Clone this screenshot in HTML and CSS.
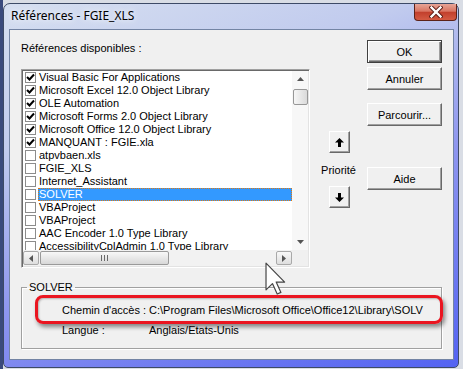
FILE: index.html
```html
<!DOCTYPE html>
<html lang="fr">
<head>
  <meta charset="UTF-8" />
  <title>Références - FGIE_XLS</title>
  <link rel="stylesheet" href="styles.css">
</head>
<body>
  <div class="desk">
    <div class="window">
      <div class="titlebar">
        <span class="title">Références - FGIE_XLS</span>
        <span class="close">
          <svg width="14" height="12" viewBox="0 0 14 12">
            <path d="M2.5 1.5 L11.5 10.5 M11.5 1.5 L2.5 10.5" stroke="#5a1a14" stroke-width="4.2" stroke-linecap="square"/>
            <path d="M2.5 1.5 L11.5 10.5 M11.5 1.5 L2.5 10.5" stroke="#fff" stroke-width="2.4" stroke-linecap="square"/>
          </svg>
        </span>
      </div>

      <div class="client">
        <div class="top">
          <div class="refs">
            <div class="lbl">Références disponibles :</div>
            <div class="listbox">
              <ul class="items">
                <li><span class="cb"><svg width="9" height="9" viewBox="0 0 9 9"><path d="M1 4 L3.5 6.5 L8 1.5" fill="none" stroke="#000" stroke-width="2"/></svg></span>Visual Basic For Applications</li>
                <li><span class="cb"><svg width="9" height="9" viewBox="0 0 9 9"><path d="M1 4 L3.5 6.5 L8 1.5" fill="none" stroke="#000" stroke-width="2"/></svg></span>Microsoft Excel 12.0 Object Library</li>
                <li><span class="cb"><svg width="9" height="9" viewBox="0 0 9 9"><path d="M1 4 L3.5 6.5 L8 1.5" fill="none" stroke="#000" stroke-width="2"/></svg></span>OLE Automation</li>
                <li><span class="cb"><svg width="9" height="9" viewBox="0 0 9 9"><path d="M1 4 L3.5 6.5 L8 1.5" fill="none" stroke="#000" stroke-width="2"/></svg></span>Microsoft Forms 2.0 Object Library</li>
                <li><span class="cb"><svg width="9" height="9" viewBox="0 0 9 9"><path d="M1 4 L3.5 6.5 L8 1.5" fill="none" stroke="#000" stroke-width="2"/></svg></span>Microsoft Office 12.0 Object Library</li>
                <li><span class="cb"><svg width="9" height="9" viewBox="0 0 9 9"><path d="M1 4 L3.5 6.5 L8 1.5" fill="none" stroke="#000" stroke-width="2"/></svg></span>MANQUANT : FGIE.xla</li>
                <li><span class="cb"></span>atpvbaen.xls</li>
                <li><span class="cb"></span>FGIE_XLS</li>
                <li><span class="cb"></span>Internet_Assistant</li>
                <li><span class="cb"></span><span class="sel">SOLVER</span></li>
                <li><span class="cb"></span>VBAProject</li>
                <li><span class="cb"></span>VBAProject</li>
                <li><span class="cb"></span>AAC Encoder 1.0 Type Library</li>
                <li><span class="cb"></span>AccessibilityCplAdmin 1.0 Type Library</li>
              </ul>
              <div class="vsb">
                <span class="arr"><svg width="7" height="4" viewBox="0 0 7 4"><path d="M3.5 0 L7 4 L0 4 Z" fill="#555"/></svg></span>
                <span class="vthumb"></span>
                <span class="track"></span>
                <span class="arr"><svg width="7" height="4" viewBox="0 0 7 4"><path d="M0 0 L7 0 L3.5 4 Z" fill="#555"/></svg></span>
              </div>
              <div class="hsb">
                <span class="sbtn"><svg width="4" height="7" viewBox="0 0 4 7"><path d="M4 0 L4 7 L0 3.5 Z" fill="#555"/></svg></span>
                <span class="hthumb"><span class="grip"></span></span>
                <span class="track"></span>
                <span class="sbtn"><svg width="4" height="7" viewBox="0 0 4 7"><path d="M0 0 L4 3.5 L0 7 Z" fill="#555"/></svg></span>
              </div>
              <div class="corner"></div>
            </div>
          </div>

          <div class="prio">
            <span class="btn arrow-btn"><svg width="9" height="9" viewBox="0 0 9 9"><path d="M4.5 0 L9 4.5 L6 4.5 L6 9 L3 9 L3 4.5 L0 4.5 Z" fill="#000"/></svg></span>
            <span class="prio-lbl">Priorité</span>
            <span class="btn arrow-btn"><svg width="9" height="9" viewBox="0 0 9 9"><path d="M3 0 L6 0 L6 4.5 L9 4.5 L4.5 9 L0 4.5 L3 4.5 Z" fill="#000"/></svg></span>
          </div>

          <div class="buttons">
            <span class="btn default">OK</span>
            <span class="btn cancel">Annuler</span>
            <span class="btn browse">Parcourir...</span>
            <span class="btn help">Aide</span>
          </div>
        </div>

        <fieldset class="group">
          <legend>SOLVER</legend>
          <div class="info">
            <span>Chemin d'accès :</span>
            <span>C:\Program Files\Microsoft Office\Office12\Library\SOLV</span>
            <span>Langue :</span>
            <span>Anglais/Etats-Unis</span>
          </div>
        </fieldset>
      </div>
    </div>
  </div>

  <div class="mark"></div>
  <svg class="cursor" width="21" height="34" viewBox="0 0 12.4 20">
    <path d="M0.6 0.6 L0.6 16.4 L4.4 12.7 L7.2 18.9 L9.4 17.9 L6.6 11.8 L11.6 11.8 Z" fill="#fff" stroke="#444" stroke-width="0.7" stroke-linejoin="round"/>
  </svg>
</body>
</html>
```
FILE: styles.css
```css
html, body {
  margin: 0;
  padding: 0;
}
body {
  width: 463px;
  height: 369px;
  overflow: hidden;
  position: relative;
  background: linear-gradient(to right, #3a4a7c 0, #3a4a7c 3px, #d9dde5 3px);
  font-family: "Liberation Sans", sans-serif;
  font-size: 11px;
  color: #000;
}
.desk {
  padding: 3px 0 0 3px;
}
.window {
  width: 454px;
  height: 363px;
  border: 1px solid #3d4a66;
  border-radius: 7px 7px 5px 5px;
  background: linear-gradient(160deg, #d6dff0 0%, #c1cbee 28%, #8e96ef 58%, #5363f2 100%);
  display: flex;
  flex-direction: column;
}
.titlebar {
  height: 25px;
  display: flex;
  justify-content: space-between;
  align-items: flex-start;
}
.title {
  font-family: "Noto Sans", sans-serif;
  font-size: 12px;
  line-height: 16px;
  padding: 4px 0 0 7px;
  text-shadow: 0 0 8px #eef2fb, 0 0 4px #eef2fb;
}
.close {
  width: 41px;
  height: 16px;
  margin-right: 1px;
  border: 1px solid #5c2218;
  border-top: none;
  border-radius: 0 0 4px 4px;
  background: linear-gradient(#e7a597 0%, #d97562 45%, #c2402d 52%, #d45b43 100%);
  display: flex;
  align-items: center;
  justify-content: center;
}
.client {
  margin: 0 4px 0 5px;
  height: 329px;
  border: 1px solid #7384a4;
  background: #f0f0f0;
  padding: 10px 0 0 11px;
  box-sizing: border-box;
  height: 331px;
}
.top {
  display: flex;
  height: 228px;
}
.refs {
  width: 289px;
}
.lbl {
  margin-top: 1px;
  line-height: 14px;
  height: 14px;
}
.listbox {
  margin-top: 14px;
  width: 289px;
  height: 199px;
  box-sizing: border-box;
  border: 1px solid;
  border-color: #a0a0a0 #fff #fff #a0a0a0;
  box-shadow: inset 1px 1px 0 #696969, inset -1px -1px 0 #e3e3e3;
  padding: 1px;
  background: #fff;
  display: grid;
  grid-template-columns: 1fr 16px;
  grid-template-rows: 1fr 16px;
}
.items {
  list-style: none;
  margin: 0;
  padding: 0;
  overflow: hidden;
  white-space: nowrap;
}
.items li {
  height: 13px;
  line-height: 13px;
  display: flex;
  align-items: center;
}
.cb {
  width: 9px;
  height: 9px;
  border: 1px solid #8c8c8c;
  background: #fff;
  margin: 0 3px 0 2px;
  flex: none;
  display: flex;
}
.sel {
  flex: 1;
  margin-left: -1px;
  height: 11px;
  line-height: 11px;
  padding-left: 0;
  background: #3399ff;
  color: #fff;
  border: 1px dotted #e07a10;
}
.vsb {
  background: #f7f7f7;
  display: flex;
  flex-direction: column;
  align-items: center;
}
.vsb .arr {
  height: 16px;
  display: flex;
  align-items: center;
  justify-content: center;
  flex: none;
}
.vthumb {
  width: 13px;
  height: 14px;
  margin-top: 2px;
  border: 1px solid #979797;
  border-radius: 2px;
  background: linear-gradient(to right, #f6f6f6, #dadada);
  flex: none;
}
.track {
  flex: 1;
}
.hsb {
  background: #f2f2f2;
  display: flex;
  align-items: stretch;
}
.sbtn {
  width: 14px;
  margin: 1px 0;
  border: 1px solid #a9a9a9;
  border-radius: 2px;
  background: linear-gradient(#f8f8f8, #dedede);
  display: flex;
  align-items: center;
  justify-content: center;
  flex: none;
}
.hthumb {
  width: 127px;
  margin: 1px 0 1px 1px;
  border: 1px solid #9a9a9a;
  border-radius: 2px;
  background: linear-gradient(#f8f8f8, #d8d8d8);
  display: flex;
  align-items: center;
  justify-content: center;
  flex: none;
}
.grip {
  width: 7px;
  height: 6px;
  background: repeating-linear-gradient(to right, #6a6a6a 0 1px, transparent 1px 3px);
}
.corner {
  background: #f0f0f0;
}
.btn {
  box-sizing: border-box;
  display: flex;
  align-items: center;
  justify-content: center;
  background: #f0f0f0;
  border: 1px solid;
  border-color: #fff #696969 #696969 #fff;
  box-shadow: inset -1px -1px 0 #a0a0a0;
}
.prio {
  width: 57px;
  display: flex;
  flex-direction: column;
  align-items: center;
  padding-top: 91px;
  box-sizing: border-box;
}
.arrow-btn {
  width: 21px;
  height: 22px;
  margin-left: 1px;
}
.prio-lbl {
  line-height: 14px;
  margin: 10px 0 9px;
}
.buttons {
  width: 75px;
  display: flex;
  flex-direction: column;
}
.buttons .btn {
  height: 23px;
}
.btn.default {
  border: 1px solid #404040;
  box-shadow: inset 1px 1px 0 #fff, inset -1px -1px 0 #696969, inset -2px -2px 0 #a0a0a0;
}
.btn.cancel {
  margin-top: 4px;
}
.btn.browse {
  margin-top: 13px;
}
.btn.help {
  margin-top: 41px;
}
.group {
  margin: 12px 0 0 0;
  width: 421px;
  height: 69px;
  box-sizing: border-box;
  padding: 0;
  border: 1px solid #a0a0a0;
  box-shadow: inset 1px 1px 0 #fff, 1px 1px 0 #fff;
}
.group legend {
  margin-left: 5px;
  padding: 0 2px;
  line-height: 14px;
}
.info {
  display: grid;
  grid-template-columns: 87px auto;
  row-gap: 6px;
  line-height: 14px;
  padding: 9px 0 0 40px;
  white-space: nowrap;
}
.mark {
  position: absolute;
  left: 35px;
  top: 295px;
  width: 408px;
  height: 29px;
  box-sizing: border-box;
  border: 3px solid #ea1520;
  border-radius: 8px;
  box-shadow: 2px 3px 4px rgba(0, 0, 0, 0.45), inset 1px 1px 2px rgba(0, 0, 0, 0.25);
}
.cursor {
  position: absolute;
  left: 265px;
  top: 262px;
}
```
